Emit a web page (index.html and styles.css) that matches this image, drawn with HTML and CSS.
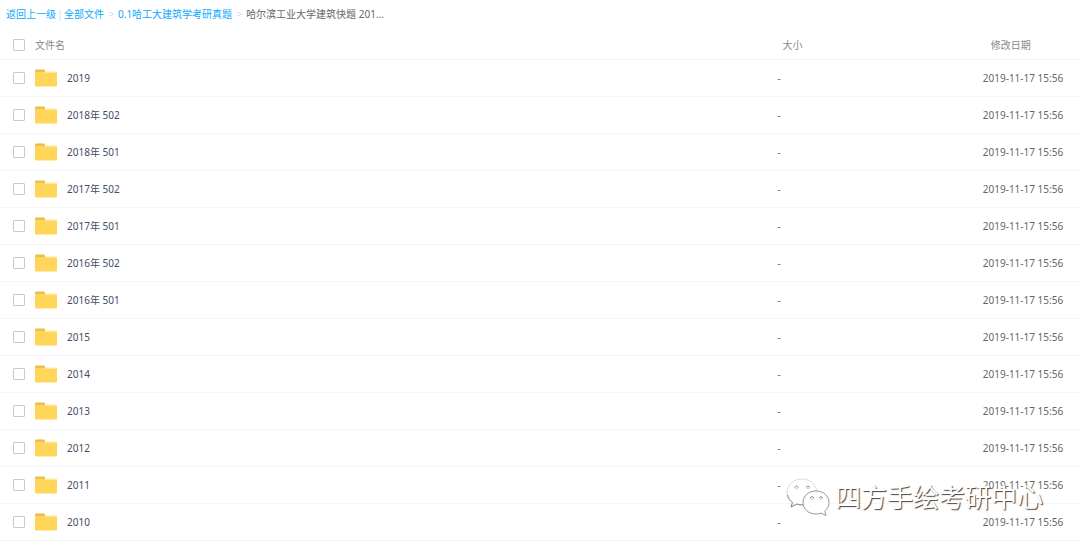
FILE: index.html
```html
<!DOCTYPE html>
<html lang="zh-CN">
<head>
<meta charset="utf-8">
<title>全部文件</title>
<link rel="stylesheet" href="styles.css">
</head>
<body>
<svg class="defs" aria-hidden="true">
  <symbol id="folder" viewBox="0 0 22 18">
    <path d="M1 0.5h8q1 0 1 1v4H0v-4q0-1 1-1z" fill="#ecbe4e"/>
    <path d="M0 3h10.500l1 0h9.500q1 0 1 1v12.500q0 1-1 1H1q-1 0-1-1z" fill="#ffd659"/>
    <path d="M10 2.500h11q1 0 1 1v0.500H10z" fill="#ffe69a"/>
  </symbol>
</svg>
<main class="browser">
  <nav class="crumbs" aria-label="路径">
    <a href="#">返回上一级</a><span class="bar">|</span><a href="#">全部文件</a><span class="arrow">&gt;</span><a href="#">0.1哈工大建筑学考研真题</a><span class="arrow">&gt;</span><span class="current">哈尔滨工业大学建筑快题 201...</span>
  </nav>
  <table class="files">
    <thead>
      <tr><th class="name"><div class="cell"><input type="checkbox" aria-label="全选"><span>文件名</span></div></th><th class="size">大小</th><th class="date">修改日期</th></tr>
    </thead>
    <tbody id="rows"></tbody>
  </table>
  <div class="watermark">
    <svg class="wechat" viewBox="0 0 44 38" aria-hidden="true">
      <g fill="#fff" stroke-width="1">
        <path d="M16 1C8 1 1 6.500 1 14c0 4.500 2 8 5.500 10.500L5 29l6-3c2 .7 4 1 7 .8 0-9 6-14 13-14C29.500 5.500 23 1 16 1z" stroke="#ddd"/>
        <path d="M1.500 17c.8 3.500 2.500 5.700 5 7.500L5 29l6-3c2 .7 4 1 6.500.8" stroke="#888" fill="none"/>
        <path d="M30 13c-7.500 0-13 5-13 11.500S22.500 36 30 36c2 0 3.500-.3 5-.9l5 2.400-1.200-4.200C41.500 31 43 28 43 24.500 43 18 37.500 13 30 13z" stroke="#999"/>
        <path d="M8.500 9.500q2-3 4 0M20 9.500q2-3 4 0M24 20q2-3 4 0M33 20q2-3 4 0" stroke="#888" fill="none"/>
        <path d="M9 10q1.500 1.500 3 0M20.500 10q1.500 1.500 3 0M24.500 20.500q1.500 1.500 3 0M33.500 20.500q1.500 1.500 3 0" stroke="#ccc" fill="none"/>
      </g>
    </svg>
    <span>四方手绘考研中心</span>
  </div>
</main>
<script src="files.js"></script>
</body>
</html>
```
FILE: files.js
```js
const names = ["2019", "2018年 502", "2018年 501", "2017年 502", "2017年 501", "2016年 502", "2016年 501", "2015", "2014", "2013", "2012", "2011", "2010"];
document.getElementById("rows").innerHTML = names.map((name, i) => `
  <tr>
    <td class="name"><div class="cell"><input type="checkbox" id="f${i}"><label for="f${i}"><svg class="folder" aria-hidden="true"><use href="#folder"/></svg>${name}</label></div></td>
    <td class="size">-</td>
    <td class="date">2019-11-17 15:56</td>
  </tr>`).join("");
```
FILE: styles.css
```css
* { box-sizing: border-box; }
body {
  margin: 0;
  background: #fff;
  color: #666;
  font: 10px/16px "Noto Sans", "Noto Sans CJK SC", sans-serif;
}
.defs { position: absolute; width: 0; height: 0; }
.browser { position: relative; }
.crumbs {
  display: flex;
  align-items: center;
  height: 30px;
  padding: 0 6px 2px;
  white-space: nowrap;
}
.crumbs a { color: #09aaff; text-decoration: none; }
.bar { width: 8px; text-align: center; color: #c4dbfe; }
.arrow { width: 14px; text-align: center; color: #c4dbfe; }
.files {
  width: 100%;
  table-layout: fixed;
  border-collapse: separate;
  border-spacing: 0;
}
.files th,
.files td {
  height: 37px;
  padding: 0;
  border-bottom: 1px solid #f4f6fa;
  text-align: left;
  font-weight: 400;
  white-space: nowrap;
}
.files th { height: 30px; color: #888; }
.files .name { width: 72%; padding-left: 13px; }
.files .size { width: 19%; }
.files .date { width: 9%; }
.files th.size { padding-left: 5px; }
.files th.date { padding-left: 8px; }
.cell { display: flex; align-items: center; gap: 10px; }
td .cell { color: #424e67; }
input {
  appearance: none;
  width: 12px;
  height: 12px;
  margin: 0;
  border: 1px solid #c3cbd9;
  border-radius: 1px;
  background: #fff;
}
input:checked { background: #09aaff; }
label { display: flex; align-items: center; gap: 10px; }
.folder { width: 22px; height: 18px; }
.watermark {
  position: absolute;
  right: 37px;
  bottom: 24px;
  display: flex;
  align-items: center;
  gap: 5px;
  color: #fff;
  font-size: 26px;
  line-height: 40px;
  text-shadow: 1px 1px 1px #444;
  pointer-events: none;
}
.wechat { width: 44px; height: 38px; }
```
